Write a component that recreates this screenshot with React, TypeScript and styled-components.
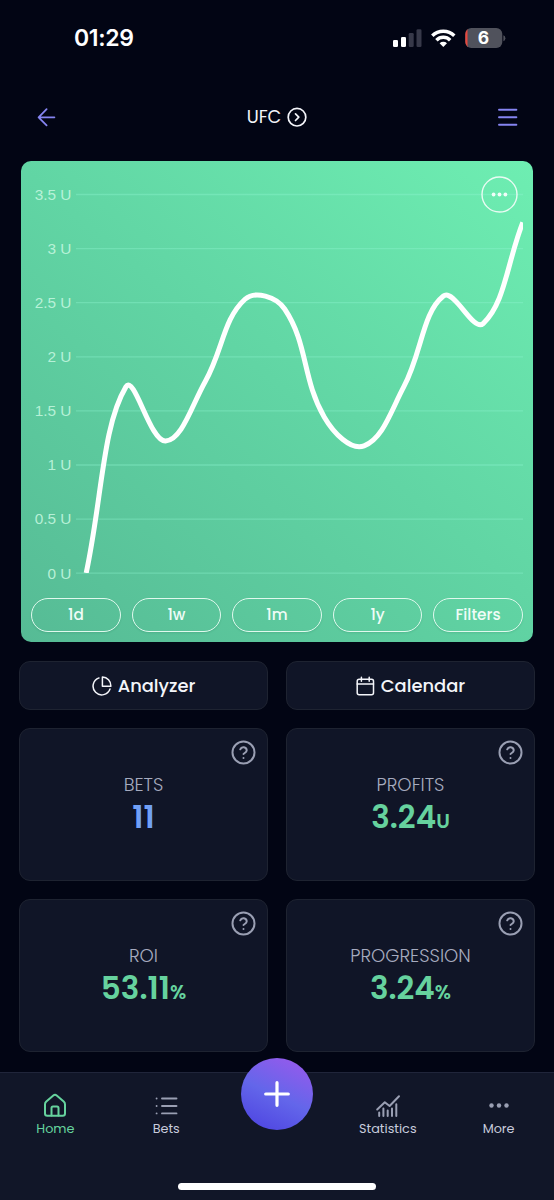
import React from "react";
import styled, { createGlobalStyle } from "styled-components";

const GlobalStyle = createGlobalStyle`
  * { box-sizing: border-box; }
  body { margin: 0; background: #020514; }
  button { font: inherit; color: inherit; background: none; border: 0; padding: 0; margin: 0; }
  svg { display: block; flex: none; }
`;

const Screen = styled.div`
  width: 554px;
  height: 1200px;
  display: flex;
  flex-direction: column;
  background: #020514;
  color: #f4f5fa;
  font-family: Poppins, Inter, "Liberation Sans", sans-serif;
  overflow: hidden;
`;

const StatusBar = styled.div`
  height: 75px;
  padding: 0 48px 0 74px;
  display: flex;
  align-items: center;
  justify-content: space-between;
`;

const Clock = styled.span`
  font: 600 23px/28px Inter, sans-serif;
  letter-spacing: -0.35px;
  color: #fff;
`;

const Header = styled.header`
  height: 86px;
  padding: 0 36px 2px 35px;
  display: flex;
  align-items: center;
  justify-content: space-between;
`;

const Title = styled.button`
  position: relative;
  left: -0.5px;
  display: flex;
  align-items: center;
  gap: 6px;
  font-size: 17.8px;
  line-height: 24px;
`;

const Content = styled.main`
  flex: 1;
  min-height: 0;
  padding: 0 19px;
  display: flex;
  flex-direction: column;
`;

const ChartCard = styled.section`
  position: relative;
  flex: none;
  height: 481px;
  margin: 0 2px 19px;
  padding-bottom: 10px;
  border-radius: 10px;
  display: flex;
  flex-direction: column;
  background: linear-gradient(40deg, #56bb95 0%, #61d5a4 52%, #6eeeb2 100%);
`;

const Pills = styled.div`
  display: grid;
  grid-template-columns: repeat(5, 1fr);
  gap: 10.6px;
  padding: 0 10px;
  margin-top: auto;
`;

const Pill = styled.button`
  height: 34px;
  border: 1.5px solid #e0f9ee;
  border-radius: 17px;
  font-size: 15.3px;
  font-weight: 500;
  line-height: 20px;
  color: #effcf7;
  box-shadow: 0 1px 2px rgba(20, 90, 60, 0.15);
`;

const MoreButton = styled.button`
  position: absolute;
  top: 15px;
  right: 15px;
`;

const Grid = styled.div`
  display: grid;
  grid-template-columns: 1fr 1fr;
  gap: 18px;
`;

const Panel = styled.div`
  border: 1.3px solid #1e2331;
  border-radius: 11px;
  background: #101527;
`;

const ActionButton = styled(Panel).attrs({ as: "button" })`
  height: 49px;
  display: flex;
  align-items: center;
  justify-content: center;
  gap: 6px;
  border: 1px solid #1e2331;
  background: #101527;
  font-size: 17.9px;
  font-weight: 500;
  line-height: 24px;
`;

const StatCard = styled(Panel)`
  position: relative;
  height: 153px;
  display: flex;
  flex-direction: column;
  align-items: center;
  padding-top: 43px;
`;

const StatLabel = styled.span`
  font-size: 18.1px;
  font-weight: 300;
  line-height: 26px;
  color: #a6abbf;
`;

const StatValue = styled.div<{ $color: string }>`
  margin-top: -1px;
  font-size: 31px;
  font-weight: 600;
  line-height: 40px;
  color: ${(p) => p.$color};
`;

const Unit = styled.small`
  font-size: 19.6px;
`;

const HelpButton = styled.button`
  position: absolute;
  top: 10px;
  right: 10px;
`;

const Nav = styled.nav`
  position: relative;
  height: 128px;
  border-top: 1.5px solid #20253a;
  background: #111628;
  display: grid;
  grid-template-columns: repeat(5, 1fr);
`;

const NavItem = styled.button<{ $active?: boolean }>`
  height: 65px;
  padding-top: 19px;
  display: flex;
  flex-direction: column;
  align-items: center;
  gap: 1px;
  font-size: 12.8px;
  line-height: 18px;
  color: ${(p) => (p.$active ? "#66d39e" : "#c8ccdd")};
`;

const AddButton = styled.button`
  justify-self: center;
  width: 72px;
  height: 72px;
  margin-top: -15px;
  border-radius: 50%;
  display: grid;
  place-items: center;
  background: linear-gradient(25deg, #5048e2 10%, #6366ea 48%, #955aec 92%);
`;

const HomeIndicator = styled.div`
  position: absolute;
  left: 178px;
  bottom: 10px;
  width: 198px;
  height: 7px;
  border-radius: 4px;
  background: #fff;
`;

const StatusIcons = () => (
  <svg width="113" height="22" viewBox="393 26 113 22">
    <g fill="#fff">
      <rect x="393" y="39" width="5" height="7" rx="1.3" />
      <rect x="401" y="36" width="5" height="10" rx="1.3" />
    </g>
    <g fill="#373949">
      <rect x="408.7" y="32" width="5" height="14" rx="1.3" />
      <rect x="416.5" y="28.3" width="5" height="17.7" rx="1.3" />
    </g>
    <g fill="none" stroke="#fff" strokeWidth="3.5">
      <path d="M432.3 34.800a15.8 15.8 0 0 1 22 0" />
      <path d="M436.4 39.2a9.8 9.8 0 0 1 13.8 0" />
    </g>
    <path fill="#fff" d="M439.6 42.2a5.4 5.4 0 0 1 7.4 0l-3.7 3.7z" />
    <clipPath id="battery"><rect x="465.3" y="27" width="37" height="20" rx="6" /></clipPath>
    <g clipPath="url(#battery)">
      <rect x="465" y="27" width="38" height="20" fill="#50525c" />
      <rect x="465" y="27" width="2.5" height="20" fill="#e8473d" />
    </g>
    <path d="M503.4 34.3q2 .7 2 3t-2 3z" fill="#50525c" />
    <text x="483.4" y="43.4" textAnchor="middle" fill="#fff" fontFamily="Inter, sans-serif" fontWeight="700" fontSize="17.5">6</text>
  </svg>
);

const HelpIcon = () => (
  <svg width="27" height="27" viewBox="0 0 24 24" fill="none" stroke="#9a9fb3" strokeWidth="1.75" strokeLinecap="round" strokeLinejoin="round">
    <circle cx="12" cy="12" r="9.8" />
    <path d="M9.1 9.2a3 3 0 0 1 5.8 .9c0 2-2.9 2.7-2.9 3.3M12 16.9h.01" />
  </svg>
);

const PieIcon = () => (
  <svg width="20" height="20" viewBox="0 0 20 20" fill="none" stroke="currentColor" strokeWidth="1.5" strokeLinecap="round" strokeLinejoin="round">
    <path d="M7 1.9a8.7 8.7 0 1 0 11 11.1" />
    <path d="M10.4 1v9.2h8.5A8.9 8.9 0 0 0 10.4 1z" />
  </svg>
);

const CalendarIcon = () => (
  <svg width="19" height="20" viewBox="0 0 19 20" fill="none" stroke="currentColor" strokeWidth="1.5" strokeLinecap="round" strokeLinejoin="round">
    <rect x="1.2" y="3.2" width="16.3" height="15.6" rx="2" />
    <path d="M1.2 8h16.3M5.4 1.2v4M13.2 1.2v4" />
  </svg>
);

/* Profit curve */
const PLOT = { left: 86.2, right: 522.8, base: 573, unit: 108.2 };
const balance = [0, 1.72, 1.22, 1.77, 2.53, 2.44, 1.44, 1.175, 1.72, 2.56, 2.305, 3.24];
const ticks = [3.5, 3, 2.5, 2, 1.5, 1, 0.5, 0];
const yOf = (value: number) => PLOT.base - value * PLOT.unit;

function splinePath(values: number[], tension: number) {
  const step = (PLOT.right - PLOT.left) / (values.length - 1);
  const pts = values.map((v, i) => ({ x: PLOT.left + i * step, y: yOf(v) }));
  const handles = pts.map((p, i) => {
    const prev = pts[i - 1] ?? p;
    const next = pts[i + 1] ?? p;
    const d0 = Math.hypot(p.x - prev.x, p.y - prev.y);
    const d1 = Math.hypot(next.x - p.x, next.y - p.y);
    const a = (tension * d0) / (d0 + d1);
    const b = (tension * d1) / (d0 + d1);
    return {
      inX: p.x - a * (next.x - prev.x),
      inY: p.y - a * (next.y - prev.y),
      outX: p.x + b * (next.x - prev.x),
      outY: p.y + b * (next.y - prev.y),
    };
  });
  return pts
    .map((p, i) =>
      i === 0
        ? `M${p.x} ${p.y}`
        : `C${handles[i - 1].outX} ${handles[i - 1].outY} ${handles[i].inX} ${handles[i].inY} ${p.x} ${p.y}`
    )
    .join("");
}

const ProfitChart = () => (
  <svg width="512" height="432" viewBox="21 161 512 432">
    {ticks.map((t) => (
      <g key={t}>
        <path d={`M76 ${yOf(t) + 0.2}H523`} stroke="#8ff5d0" strokeOpacity=".38" strokeWidth="1.3" />
        <text x="71.5" y={yOf(t) + 5.5} textAnchor="end" fontFamily="Liberation Sans, Arial, sans-serif" fontSize="15.4" fill="#c3f6df" fillOpacity=".9">
          {t} U
        </text>
      </g>
    ))}
    <clipPath id="plot"><rect x="80" y="190" width="443" height="383" /></clipPath>
    <path d={splinePath(balance, 0.4)} fill="none" stroke="#fff" strokeWidth="5" clipPath="url(#plot)" />
  </svg>
);

const ranges = ["1d", "1w", "1m", "1y", "Filters"];

const stats = [
  { label: "BETS", value: "11", unit: "", color: "#71a0f6" },
  { label: "PROFITS", value: "3.24", unit: "U", color: "#66d29e" },
  { label: "ROI", value: "53.11", unit: "%", color: "#66d29e" },
  { label: "PROGRESSION", value: "3.24", unit: "%", color: "#66d29e" },
];

export default function App() {
  return (
    <Screen>
      <GlobalStyle />
      <StatusBar>
        <Clock>01:29</Clock>
        <StatusIcons />
      </StatusBar>
      <Header>
        <button aria-label="Back">
          <svg width="22" height="22" viewBox="0 0 22 22" fill="none" stroke="#8584f0" strokeWidth="1.8" strokeLinecap="round" strokeLinejoin="round">
            <path d="M19.4 11.3H3.6M11.6 3.2l-8 8.1 8 8" />
          </svg>
        </button>
        <Title>
          UFC
          <svg width="20" height="20" viewBox="0 0 20 20" fill="none" stroke="currentColor" strokeWidth="1.7" strokeLinecap="round" strokeLinejoin="round">
            <circle cx="10" cy="10.2" r="8.8" />
            <path d="M8.5 6.9l3.3 3.3-3.3 3.3" />
          </svg>
        </Title>
        <button aria-label="Menu">
          <svg width="20" height="20" viewBox="0 0 20 20" stroke="#8584f0" strokeWidth="1.9" strokeLinecap="round">
            <path d="M1 2.7h17.4M1 10.3h17.4M1 17.8h17.4" />
          </svg>
        </button>
      </Header>
      <Content>
        <ChartCard>
          <ProfitChart />
          <Pills>
            {ranges.map((label) => (
              <Pill key={label}>{label}</Pill>
            ))}
          </Pills>
          <MoreButton aria-label="Chart options">
            <svg width="37" height="37" viewBox="0 0 37 37">
              <circle cx="18.5" cy="18.5" r="17.5" fill="none" stroke="#e9fbf3" strokeWidth="1.4" />
              <g fill="#f1fdf8">
                <circle cx="12.6" cy="18.5" r="1.9" />
                <circle cx="18.5" cy="18.5" r="1.9" />
                <circle cx="24.4" cy="18.5" r="1.9" />
              </g>
            </svg>
          </MoreButton>
        </ChartCard>
        <Grid>
          <ActionButton><PieIcon />Analyzer</ActionButton>
          <ActionButton><CalendarIcon />Calendar</ActionButton>
          {stats.map((s) => (
            <StatCard key={s.label}>
              <HelpButton aria-label={`About ${s.label}`}><HelpIcon /></HelpButton>
              <StatLabel>{s.label}</StatLabel>
              <StatValue $color={s.color}>
                {s.value}
                {s.unit && <Unit>{s.unit}</Unit>}
              </StatValue>
            </StatCard>
          ))}
        </Grid>
      </Content>
      <Nav>
        <NavItem $active>
          <svg width="26" height="27" viewBox="0 0 26 27" fill="none" stroke="currentColor" strokeWidth="2" strokeLinecap="round" strokeLinejoin="round">
            <path d="M3 12.2c0-1.3.3-1.8 1.3-2.7l7-6.1c1.2-1 2.2-1 3.4 0l7 6.1c1 .9 1.3 1.4 1.3 2.7v9.3c0 1.5-.8 2.3-2.3 2.3H5.3c-1.5 0-2.3-.8-2.3-2.3z" />
            <path d="M9.5 23.5v-7.5c0-1 .5-1.500 1.5-1.500h4c1 0 1.500.5 1.500 1.500v7.500" />
          </svg>
          Home
        </NavItem>
        <NavItem>
          <svg width="26" height="27" viewBox="0 0 26 27" stroke="#9a9fb3" strokeWidth="1.9" strokeLinecap="round">
            <path d="M9 6.500h14.500M9 14h14.500M9 21.400h14.500M3.600 6.500h.01M3.600 14h.01M3.600 21.400h.01" />
          </svg>
          Bets
        </NavItem>
        <AddButton aria-label="Add bet">
          <svg width="28" height="28" viewBox="0 0 28 28" stroke="#fff" strokeWidth="3.2" strokeLinecap="round">
            <path d="M14 2.7v22.6M2.7 14h22.6" />
          </svg>
        </AddButton>
        <NavItem>
          <svg width="26" height="27" viewBox="0 0 26 27" fill="none" stroke="#9a9fb3" strokeWidth="2" strokeLinecap="round" strokeLinejoin="round">
            <path d="M2.200 17.500l7.600-7.300 4.800 3.800L24 4.300" />
            <path d="M4.200 20.500v3.500M8.400 16.500v7.500M12.700 18.500v5.500M17 16.500v7.500M21.300 12.300v11.700" />
          </svg>
          Statistics
        </NavItem>
        <NavItem>
          <svg width="26" height="27" viewBox="0 0 26 27" fill="#9a9fb3">
            <circle cx="5.5" cy="13.5" r="2.2" />
            <circle cx="13" cy="13.5" r="2.2" />
            <circle cx="20.5" cy="13.5" r="2.2" />
          </svg>
          More
        </NavItem>
        <HomeIndicator />
      </Nav>
    </Screen>
  );
}
